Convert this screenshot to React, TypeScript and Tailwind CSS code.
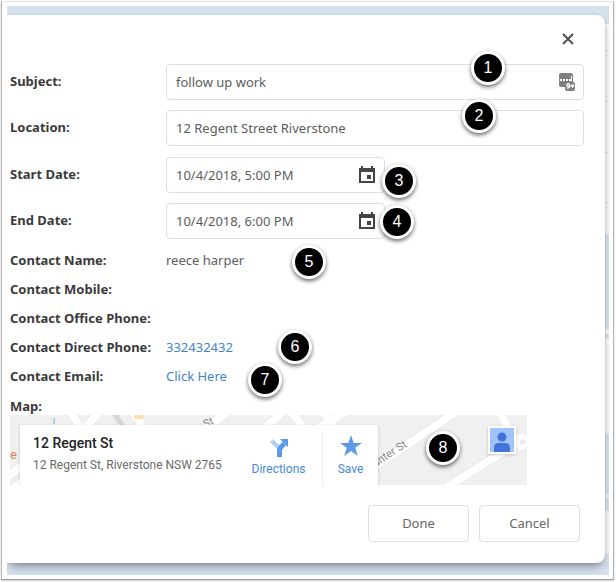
import type { ReactNode } from "react";

const Badge = ({ n, className }: { n: number; className: string }) => {
  return (
    <span
      className={`absolute flex size-[34px] items-center justify-center rounded-full border-[3px] border-white bg-black font-['Liberation_Sans',sans-serif] text-base text-white shadow-[0_2px_4px_rgba(0,0,0,0.6)] ${className}`}
    >
      {n}
    </span>
  );
};

const badges = [
  { n: 1, className: "left-[471px] top-[51px]" },
  { n: 2, className: "left-[462px] top-[99px]" },
  { n: 3, className: "left-[382px] top-[164px]" },
  { n: 4, className: "left-[380px] top-[205px]" },
  { n: 5, className: "left-[292px] top-[245px]" },
  { n: 6, className: "left-[278px] top-[330px]" },
  { n: 7, className: "left-[248px] top-[363px]" },
  { n: 8, className: "left-[426px] top-[431px]" },
];

const inputClass =
  "h-9 w-full rounded border border-[#dfdfdf] bg-white pl-[9px] text-[13px] text-[#5c5c5c] outline-none";

const CalendarIcon = () => (
  <svg viewBox="0 0 18 18" className="size-[18px] fill-[#444]">
    <path d="M3 0h2v2h8V0h2v2h2v15H1V2h2zM3 6v9h12V6z" fillRule="evenodd" />
    <path d="M9 9h4v4H9z" />
  </svg>
);

const KeyIcon = () => (
  <svg viewBox="0 0 18 20" className="h-5 w-[18px]">
    <rect x="1" y="1" width="14" height="14" rx="2" fill="#7f7f7f" />
    <path d="M2 7h2v2H2zM5 7h2v2H5zM8 7h2v2H8zM11 7h2v2h-2zM13 4h1v5h-1z" fill="#fff" />
    <rect x="7" y="10" width="10" height="9" rx="2" fill="#7f7f7f" />
    <path
      d="M11.500 13a1.300 1.300 0 1 0-2.600 0 1.300 1.300 0 0 0 2.600 0v1.500q0 1.700-2.500 1.500M12.500 14h4M14.500 12v4"
      fill="none"
      stroke="#fff"
      strokeWidth="1.3"
    />
  </svg>
);

const Field = ({ id, label, value }: { id: string; label: string; value: string }) => {
  return (
    <div className="flex items-center">
      <label htmlFor={id} className="w-[156px] shrink-0 font-bold text-[#3a3a3a]">
        {label}
      </label>
      <div className="relative grow">
        <input id={id} defaultValue={value} className={inputClass} />
        {id === "subject" && (
          <span className="absolute right-2 top-2">
            <KeyIcon />
          </span>
        )}
      </div>
    </div>
  );
};

const DateField = ({ id, label, value }: { id: string; label: string; value: string }) => {
  return (
    <div className="flex items-center">
      <label htmlFor={id} className="w-[156px] shrink-0 font-bold text-[#3a3a3a]">
        {label}
      </label>
      <div className="relative w-[219px]">
        <input id={id} defaultValue={value} className={inputClass} />
        <button type="button" aria-label="Open calendar" className="absolute right-[9px] top-[9px]">
          <CalendarIcon />
        </button>
      </div>
    </div>
  );
};

const Detail = ({ label, children }: { label: string; children?: ReactNode }) => {
  return (
    <div className="flex h-[29px] items-center">
      <dt className="w-[156px] shrink-0 whitespace-nowrap font-bold text-[#3a3a3a]">{label}</dt>
      <dd className="text-[#5c5c5c]">{children}</dd>
    </div>
  );
};

const Roads = () => (
  <svg viewBox="0 0 516 70" preserveAspectRatio="xMinYMin slice" className="absolute inset-0 h-full w-full">
    <g fill="none" stroke="#e0e0e0" strokeWidth="9">
      <path d="M-4 63 16 48M-4 78 16 64" />
      <path d="M58-6 78 24M92-6 70 18M120-6 142 24M180 24 222-6M242 24 276-6M278-6 300 20" />
      <path d="M296 20 340-6M310-6 328 18M350 61 450-6M430 76 516 22M488-6 508 34" />
    </g>
    <g fill="none" stroke="#fff" strokeWidth="8">
      <path d="M-4 63 16 48M-4 78 16 64" />
      <path d="M58-6 78 24M92-6 70 18M120-6 142 24M180 24 222-6M242 24 276-6M278-6 300 20" />
      <path d="M296 20 340-6M310-6 328 18M350 61 450-6M430 76 516 22M488-6 508 34" />
    </g>
    <circle cx="510" cy="27" r="8" fill="#fff" />
    <circle cx="512" cy="27" r="3" fill="#eee" />
    <path d="M102-4 118 18" stroke="#d6d6d6" strokeWidth="5" />
    <path d="M44 3v6" stroke="#a6d3f5" strokeWidth="2" />
    <path d="M124 0h9v4h-9z" fill="#fbe3b0" />
    <g className="font-[Roboto,sans-serif]" fontSize="11" fill="#888">
      <text transform="translate(365 52) rotate(-33)">unter St</text>
      <text transform="translate(195 13) rotate(-25)">St</text>
      <text x="0" y="44" fontSize="13" fill="#e0805a">
        e
      </text>
    </g>
  </svg>
);

const MapPreview = () => {
  return (
    <div className="relative h-[70px] w-[90%] overflow-hidden bg-[#f0f0f0] font-[Roboto,sans-serif]">
      <Roads />
      <div className="absolute left-[10px] top-[10px] flex h-16 w-[358px] bg-white pl-[13px] pt-2 shadow-[0_1px_3px_rgba(0,0,0,0.2)]">
        <div className="w-[207px] shrink-0 whitespace-nowrap">
          <p className="text-sm font-medium leading-5 text-[#222]">12 Regent St</p>
          <p className="mt-[2px] text-xs leading-5 text-[#6b6b6b]">12 Regent St, Riverstone NSW 2765</p>
        </div>
        <a
          href="#directions"
          className="flex w-[82px] shrink-0 flex-col items-center pr-[5px] text-xs text-[#4489e0]"
        >
          <svg viewBox="0 0 20 20" className="mt-1 size-5">
            <path d="M2.500 3.500 10 11" stroke="#b0cff5" strokeWidth="4" />
            <path d="M10.500 20v-6q0-2.500 2-4.500l3-3" stroke="#5c9ae8" strokeWidth="5" fill="none" />
            <path d="M11 2h8v8z" fill="#5c9ae8" />
          </svg>
          <span className="mt-1 leading-4">Directions</span>
        </a>
        <div className="h-[52px] w-px shrink-0 bg-[#ebebeb]" />
        <a href="#save" className="flex grow flex-col items-center text-xs text-[#4489e0]">
          <svg viewBox="0 0 20 20" className="mt-[2px] size-[22px] fill-[#5c9ae8]">
            <path d="m10 0 2.400 7.300H20l-6.200 4.400L16.200 19 10 14.500 3.800 19l2.400-7.300L0 7.300h7.600z" />
          </svg>
          <span className="mt-1 leading-4">Save</span>
        </a>
      </div>
      <div className="absolute right-[11px] top-[11px] bg-white p-[2px] shadow-[0_1px_3px_rgba(0,0,0,0.2)]">
        <svg viewBox="0 0 24 24" className="size-6">
          <path d="M0 0h24v24H0z" fill="#a1c2fa" />
          <circle cx="12" cy="9" r="4.500" fill="#4272db" />
          <path d="M4 24v-4q0-5 5-5h6q5 0 5 5v4z" fill="#4272db" />
        </svg>
      </div>
    </div>
  );
};

// sliver of the calendar that shows behind the dialog
const Backdrop = () => {
  return (
    <div className="flex w-[5px] shrink-0 flex-col pt-[18px]">
      <div className="h-[26px] bg-[#f6f6f6]" />
      <div className="mt-px h-[50px] bg-[#f6f6f6]" />
      <div className="mt-px h-[50px] bg-[#f6f6f6]" />
      <div className="mt-px h-[49px] bg-[#f6f6f6]" />
      <div className="mt-px h-[31px] bg-[#f6f6f6]" />
      <div className="mt-[95px] h-[5px] bg-[#f6f6f6]" />
      <div className="h-[3px] bg-[#dcdfe3]" />
      <div className="mt-px h-[96px] bg-[#f6f6f6]" />
      <div className="mt-[60px] h-1 bg-[#f6f6f6]" />
      <div className="mt-[13px] h-[43px] bg-[#f6f6f6]" />
    </div>
  );
};

const App = () => {
  return (
    <div className="relative flex min-h-screen flex-col bg-white p-px pb-[2px] pr-[2px] font-['Noto_Sans',sans-serif] text-[13px]">
      <div className="flex grow flex-col border border-[#e4e4e4] border-b-[#999] border-l-[#b5b5b5] border-r-[#b5b5b5] bg-white pb-1 pl-[5px] pr-1 pt-1 shadow-[0_1px_2px_rgba(0,0,0,0.2)]">
        <div className="flex grow overflow-hidden bg-[#d5e2ee]">
          <div className="relative -mr-px mb-3 mt-[9px] grow rounded-r-lg bg-white shadow-[0_6px_10px_-3px_rgba(0,0,0,0.4),0_0_3px_rgba(0,0,0,0.15)]">
            <div className="flex h-[49px] justify-end pr-[29px] pt-4">
              <button type="button" aria-label="Close" className="size-4">
                <svg viewBox="0 0 16 16" className="size-4">
                  <path d="m3 3 10 10M13 3 3 13" stroke="#505050" strokeWidth="2" />
                </svg>
              </button>
            </div>
            <form className="pl-[3px] pr-[21px]">
              <div className="flex flex-col gap-[10px]">
                <Field id="subject" label="Subject:" value="follow up work" />
                <Field id="location" label="Location:" value="12 Regent Street Riverstone" />
              </div>
              <div className="mt-[11px] flex flex-col gap-[10px]">
                <DateField id="start" label="Start Date:" value="10/4/2018, 5:00 PM" />
                <DateField id="end" label="End Date:" value="10/4/2018, 6:00 PM" />
              </div>
              <dl className="mt-[7px]">
                <Detail label="Contact Name:">reece harper</Detail>
                <Detail label="Contact Mobile:" />
                <Detail label="Contact Office Phone:" />
                <Detail label="Contact Direct Phone:">
                  <a href="tel:332432432" className="text-[#3f86c6]">
                    332432432
                  </a>
                </Detail>
                <Detail label="Contact Email:">
                  <a href="#email" className="text-[#3f86c6]">
                    Click Here
                  </a>
                </Detail>
              </dl>
              <p className="h-6 pt-[5px] font-bold leading-5 text-[#3a3a3a]">Map:</p>
              <MapPreview />
              <div className="mt-5 flex justify-end gap-[10px] pr-1">
                <button type="button" className="h-[37px] w-[101px] rounded border border-[#dfdfdf] text-[#666]">
                  Done
                </button>
                <button type="button" className="h-[37px] w-[101px] rounded border border-[#dfdfdf] text-[#666]">
                  Cancel
                </button>
              </div>
            </form>
          </div>
          <Backdrop />
        </div>
      </div>
      {badges.map((badge) => (
        <Badge key={badge.n} {...badge} />
      ))}
    </div>
  );
};

export default App;
